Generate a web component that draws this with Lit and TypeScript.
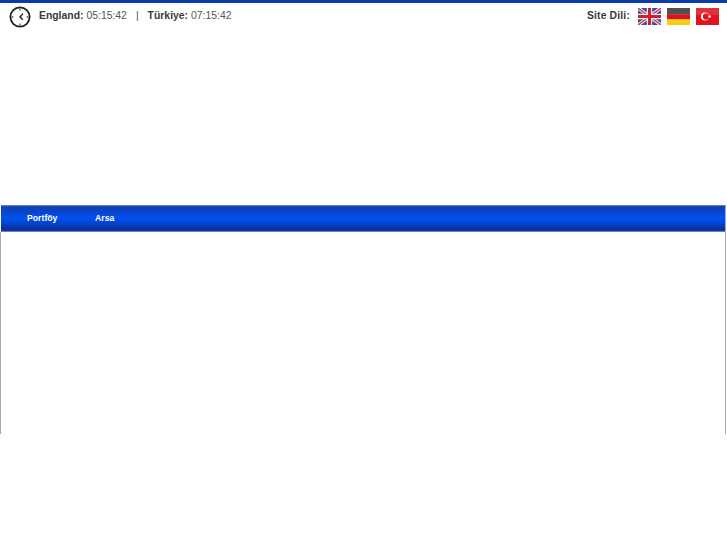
import { LitElement, html, css } from "lit";
import { customElement } from "lit/decorators.js";

@customElement("app-root")
export class AppRoot extends LitElement {
  static styles = css`
    :host { display: block; width: 727px; height: 545px; background: #fff; font-family: "Liberation Sans", Arial, sans-serif; overflow: hidden; }
    .top { height: 27px; padding: 0 8px 4px 9px; border-top: 3px solid #0a3aa8; display: flex; align-items: center; justify-content: space-between; font-size: 10.4px; color: #555; }
    .left, .right { display: flex; align-items: center; }
    .text { display: flex; margin-bottom: 3px; }
    .clock { width: 22px; height: 22px; margin-right: 8px; filter: blur(.3px); }
    b { color: #3a3a3a; }
    .sep { margin: 0 9px 0 9px; }
    .sp { margin-left: 3px; }
    .site { margin-right: 8px; margin-bottom: 3px; font-weight: bold; color: #3a3a3a; letter-spacing: .15px; }
    .flag { width: 23px; height: 17px; display: block; margin-left: 6px; filter: blur(.35px); }
    .flag:first-of-type { margin-left: 0; }
    .spacer { height: 171px; }
    .nav { margin: 0 1px; height: 27px; display: flex; align-items: center; gap: 38px; padding: 0 0 2px 26px; background: linear-gradient(#7f98dc 0, #1040b4 6%, #0a44cc 25%, #0052f0 48%, #0048d8 62%, #0a34a8 85%, #0a2e98 94%, #8ea2dc 100%); color: #fff; font-size: 8.7px; font-weight: bold; box-sizing: border-box; border-right: 1px solid #8fb0f0; }
    .portfolio { width: 30px; white-space: nowrap; }
    .panel { height: 202px; border-left: 1px solid #a8a8a8; border-right: 1px solid #a8a8a8; width: 724px; }
  `;
  render() {
    return html`
      <div class="top">
        <div class="left">
          <svg class="clock" viewBox="0 0 22 22" fill="none" stroke="#222">
            <circle cx="11" cy="11" r="9.6" stroke-width="1.8"/>
            <path d="M14 7.6L11 11l2.8 2.8" stroke-width="1.4"/>
            <path d="M11 2.5v2M11 17.5v2M2.5 11h2M17.5 11h2" stroke-width="1"/>
          </svg>
          <div class="text"><b>England:</b><span class="sp">05:15:42</span><span class="sep">|</span><b>Türkiye:</b><span class="sp">07:15:42</span></div>
        </div>
        <div class="right">
          <span class="site">Site Dili:</span>
          <svg class="flag" viewBox="0 0 23 17">
            <rect width="23" height="17" fill="#3a4f9f"/>
            <path d="M0 0L23 17M23 0L0 17" stroke="#e8e8f0" stroke-width="3.4"/>
            <path d="M0 0L23 17M23 0L0 17" stroke="#d02030" stroke-width="1.1"/>
            <path d="M11.5 0V17M0 8.5H23" stroke="#eee" stroke-width="5.4"/>
            <path d="M11.5 0V17M0 8.5H23" stroke="#d02030" stroke-width="3"/>
          </svg>
          <svg class="flag" viewBox="0 0 23 17">
            <rect width="23" height="6" fill="#333"/>
            <rect y="6" width="23" height="5.5" fill="#d8141c"/>
            <rect y="11.5" width="23" height="5.5" fill="#f8cc10"/>
            <rect width="23" height="7" fill="#fff" opacity=".15"/>
          </svg>
          <svg class="flag" viewBox="0 0 23 17">
            <rect width="23" height="17" fill="#e0141e"/>
            <circle cx="9" cy="8.5" r="4" fill="#fff"/>
            <circle cx="10.1" cy="8.5" r="3.2" fill="#e0141e"/>
            <circle cx="13.6" cy="8.5" r="1.3" fill="#fff"/>
            <rect width="23" height="7" fill="#fff" opacity=".12"/>
          </svg>
        </div>
      </div>
      <div class="spacer"></div>
      <div class="nav"><span class="portfolio">Portföy</span><span>Arsa</span></div>
      <div class="panel"></div>
    `;
  }
}
